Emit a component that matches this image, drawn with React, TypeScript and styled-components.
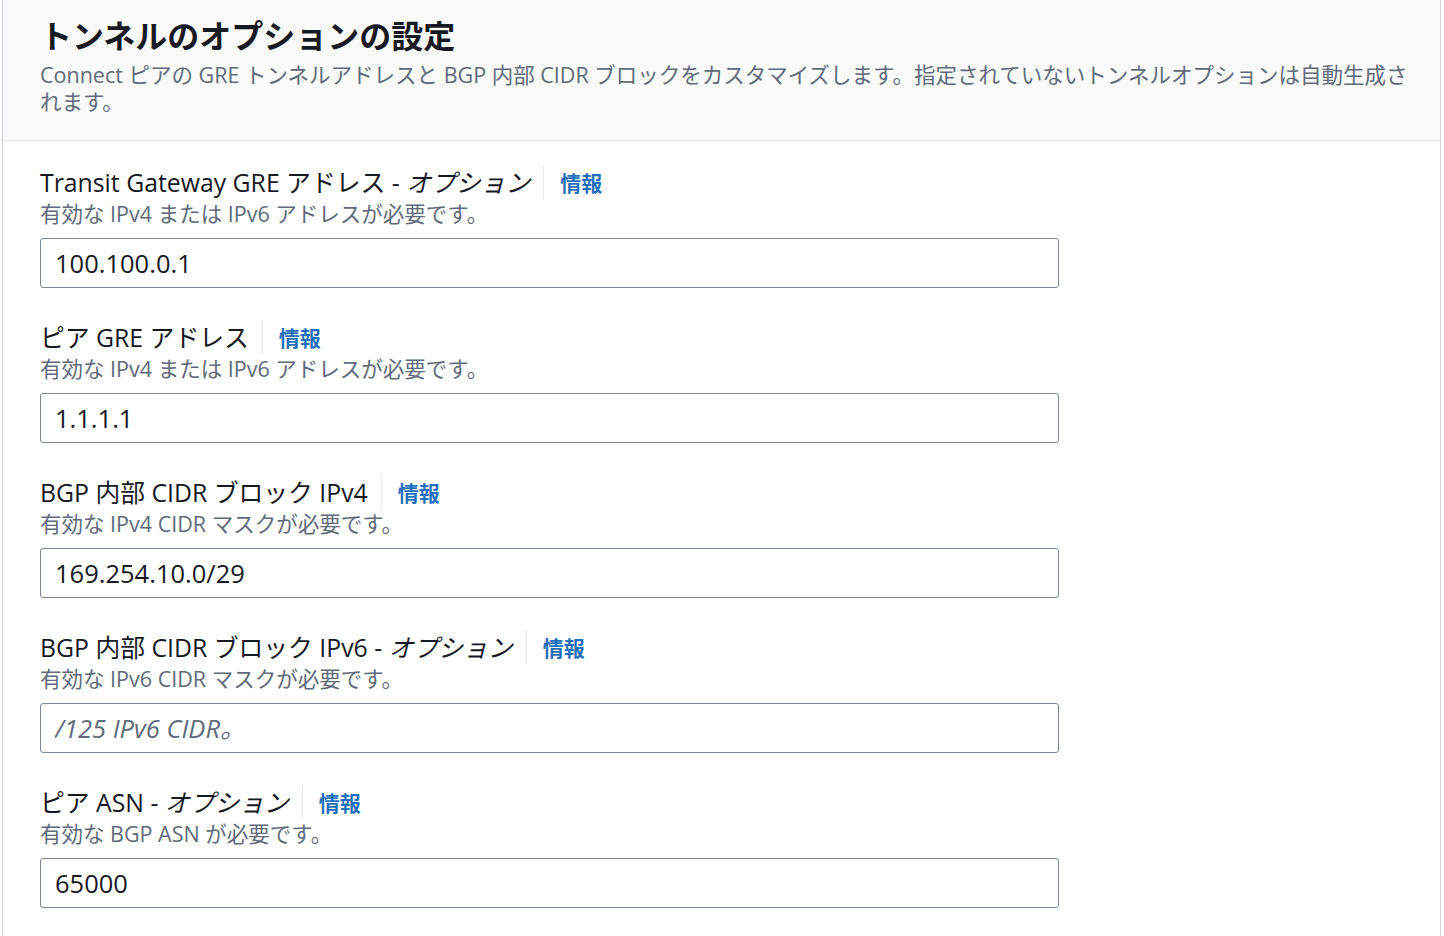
import React from "react";
import styled, { createGlobalStyle } from "styled-components";

const fontStack = `"Open Sans", "Noto Sans CJK JP", sans-serif`;

const GlobalStyle = createGlobalStyle`
  html, body {
    margin: 0;
    padding: 0;
    background: #ffffff;
  }
  body {
    font-family: ${fontStack};
    color: #16191f;
  }
`;

type Field = {
  label: string;
  optional?: boolean;
  hint: string;
  value?: string;
  placeholder?: string;
};

const fields: Field[] = [
  {
    label: "Transit Gateway GRE アドレス",
    optional: true,
    hint: "有効な IPv4 または IPv6 アドレスが必要です。",
    value: "100.100.0.1",
  },
  {
    label: "ピア GRE アドレス",
    hint: "有効な IPv4 または IPv6 アドレスが必要です。",
    value: "1.1.1.1",
  },
  {
    label: "BGP 内部 CIDR ブロック IPv4",
    hint: "有効な IPv4 CIDR マスクが必要です。",
    value: "169.254.10.0/29",
  },
  {
    label: "BGP 内部 CIDR ブロック IPv6",
    optional: true,
    hint: "有効な IPv6 CIDR マスクが必要です。",
    placeholder: "/125 IPv6 CIDR。",
  },
  {
    label: "ピア ASN",
    optional: true,
    hint: "有効な BGP ASN が必要です。",
    value: "65000",
  },
];

function App() {
  return (
    <>
      <GlobalStyle />
      <Container>
        <Header>
          <Title>トンネルのオプションの設定</Title>
          <Description>
            Connect ピアの GRE トンネルアドレスと BGP 内部 CIDR
            ブロックをカスタマイズします。指定されていないトンネルオプションは自動生成されます。
          </Description>
        </Header>
        <Body>
          {fields.map((f) => (
            <FieldRow key={f.label}>
              <LabelLine>
                <Label>
                  {f.label}
                  {f.optional && (
                    <>
                      {" - "}
                      <em>オプション</em>
                    </>
                  )}
                </Label>
                <InfoLink href="#">情報</InfoLink>
              </LabelLine>
              <Hint>{f.hint}</Hint>
              <Input
                defaultValue={f.value}
                placeholder={f.placeholder}
                readOnly
              />
            </FieldRow>
          ))}
        </Body>
      </Container>
    </>
  );
}

const Container = styled.div`
  margin-left: 2px;
  width: 1439px;
  min-height: 936px;
  border-left: 1px solid #d1d5db;
  border-right: 1px solid #d1d5db;
  box-sizing: border-box;
`;

const Header = styled.div`
  background: #fafafa;
  border-bottom: 1px solid #e9ebed;
  height: 141px;
  box-sizing: border-box;
  padding: 16px 28px 0 37px;
`;

const Title = styled.h2`
  margin: 0;
  font-size: 32px;
  font-weight: 700;
  line-height: 40px;
  color: #16191f;
`;

const Description = styled.p`
  margin: 5px 0 0;
  font-size: 21.5px;
  line-height: 27px;
  color: #5f6b7a;
`;

const Body = styled.div`
  padding: 24px 40px 0 37px;
  display: flex;
  flex-direction: column;
  gap: 32px;
`;

const FieldRow = styled.div`
  display: flex;
  flex-direction: column;
`;

const LabelLine = styled.div`
  display: flex;
  align-items: center;
  height: 34px;
`;

const Label = styled.span`
  font-size: 24.8px;
  line-height: 34px;
  color: #16191f;
  padding-right: 13px;
  border-right: 1px solid #e9ebed;

  em {
    font-style: italic;
  }
`;

const InfoLink = styled.a`
  margin-left: 16px;
  font-size: 21px;
  font-weight: 700;
  color: #1f6fbd;
  text-decoration: none;
`;

const Hint = styled.div`
  font-size: 21.5px;
  line-height: 30px;
  color: #5f6b7a;
  margin-bottom: 9px;
`;

const Input = styled.input`
  width: 1019px;
  height: 50px;
  box-sizing: border-box;
  border: 1px solid #7d8998;
  border-radius: 3px;
  padding: 0 14px;
  font-family: ${fontStack};
  font-size: 25.5px;
  color: #16191f;
  background: #ffffff;
  outline: none;

  &::placeholder {
    color: #5f6b7a;
    font-style: italic;
  }
`;

export default App;
